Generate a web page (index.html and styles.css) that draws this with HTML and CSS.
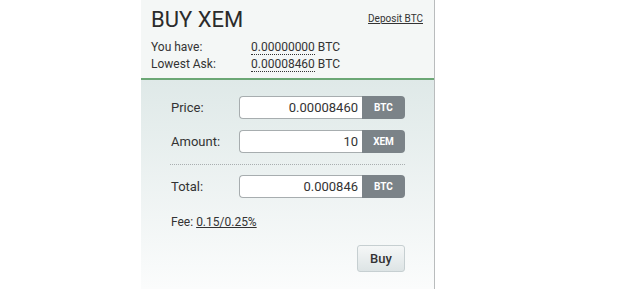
FILE: index.html
```html
<!DOCTYPE html>
<html>
<head>
    <title>Buy XEM</title>
    <link rel="stylesheet" href="styles.css">
</head>
<body>
    <div class="panel">
        <div class="panel-head">
            <div class="head-row">
                <h1>BUY XEM</h1>
                <a class="deposit" href="#">Deposit BTC</a>
            </div>
            <div class="info">
                <div class="info-row">
                    <span class="info-label">You have:</span>
                    <span class="info-value"><span class="dotted">0.00000000</span> BTC</span>
                </div>
                <div class="info-row">
                    <span class="info-label">Lowest Ask:</span>
                    <span class="info-value"><span class="dotted">0.00008460</span> BTC</span>
                </div>
            </div>
        </div>
        <div class="panel-body">
            <div class="form-row">
                <label class="form-label">Price:</label>
                <div class="input-group">
                    <div class="input-field">0.00008460</div>
                    <div class="addon">BTC</div>
                </div>
            </div>
            <div class="form-row">
                <label class="form-label">Amount:</label>
                <div class="input-group">
                    <div class="input-field">10</div>
                    <div class="addon">XEM</div>
                </div>
            </div>
            <div class="separator"></div>
            <div class="form-row">
                <label class="form-label">Total:</label>
                <div class="input-group">
                    <div class="input-field">0.000846</div>
                    <div class="addon">BTC</div>
                </div>
            </div>
            <div class="fee">Fee: <a href="#">0.15/0.25%</a></div>
            <div class="actions">
                <button class="buy">Buy</button>
            </div>
        </div>
    </div>
</body>
</html>
```

FILE: styles.css
```css
body {
    margin: 0;
    padding: 0;
    background-color: #fff;
    font-family: Roboto, "Liberation Sans", Arial, sans-serif;
    color: #333;
}

.panel {
    margin-left: 141px;
    width: 293px;
    height: 289px;
    border-right: 1px solid #b9bcbd;
    display: flex;
    flex-direction: column;
}

.panel-head {
    background-color: #f4f7f6;
    padding: 7px 11px 5px 10px;
    border-bottom: 2px solid #6ba775;
}

.head-row {
    display: flex;
    justify-content: space-between;
    align-items: flex-start;
}

h1 {
    margin: 0;
    font-size: 22px;
    font-weight: normal;
    line-height: 26px;
    color: #2b2b2b;
}

.deposit {
    margin-top: 5px;
    font-size: 10px;
    line-height: 14px;
    color: #333;
    text-decoration: underline;
}

.info {
    margin-top: 6px;
}

.info-row {
    display: flex;
    font-size: 12px;
    line-height: 17px;
}

.info-label {
    width: 100px;
}

.dotted {
    border-bottom: 1px dotted #333;
}

.panel-body {
    flex: 1;
    padding: 16px 29px 0 30px;
    background: linear-gradient(#dfe9e8, #fbfcfc);
}

.form-row {
    display: flex;
    align-items: center;
    margin-bottom: 11px;
}

.form-label {
    width: 68px;
    font-size: 13px;
}

.input-group {
    display: flex;
    width: 167px;
    height: 23px;
}

.input-field {
    flex: 1;
    background-color: #fff;
    border: 1px solid #a7adaf;
    border-right: none;
    border-radius: 4px 0 0 4px;
    font-size: 13px;
    line-height: 21px;
    text-align: right;
    padding-right: 4px;
}

.addon {
    width: 43px;
    background-color: #7b8388;
    border-radius: 0 4px 4px 0;
    color: #fff;
    font-size: 10px;
    font-weight: bold;
    line-height: 23px;
    text-align: center;
}

.separator {
    border-top: 1px dotted #a9aeb0;
    margin: 0 0 10px -1px;
}

.fee {
    margin-top: 16px;
    font-size: 12px;
    line-height: 16px;
}

.fee a {
    color: #333;
    text-decoration: underline;
}

.actions {
    display: flex;
    justify-content: flex-end;
    margin-top: 15px;
}

.buy {
    width: 48px;
    height: 27px;
    background: linear-gradient(#f5f7f7, #dde4e5);
    border: 1px solid #c6cfd1;
    border-radius: 3px;
    font-family: Roboto, "Liberation Sans", Arial, sans-serif;
    font-size: 13px;
    font-weight: 500;
    color: #333;
    padding: 0;
}
```
